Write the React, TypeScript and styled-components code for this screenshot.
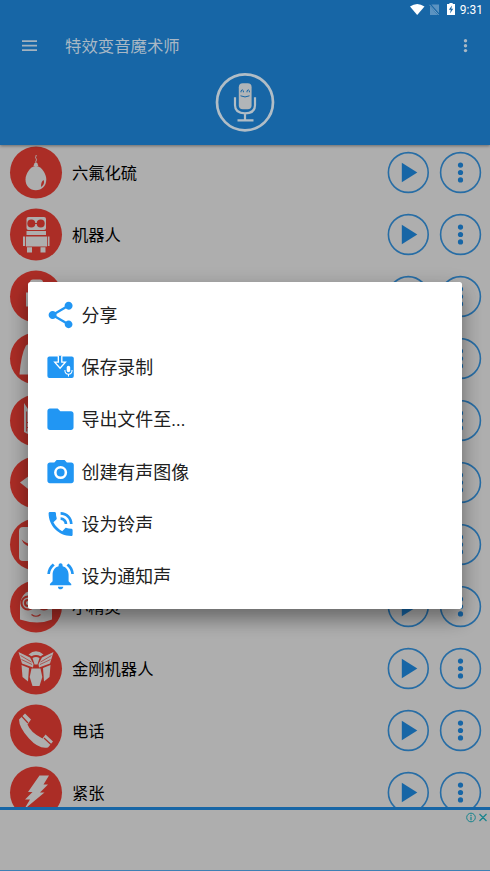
import React from "react";
import styled, { createGlobalStyle } from "styled-components";

const BLUE = "#1766a6";
const RED = "#ab2d26";
const GREY = "#aeaeae";
const ACCENT = "#2196f3";

const GlobalStyle = createGlobalStyle`
  * { box-sizing: border-box; }
  html, body { margin: 0; padding: 0; background: ${GREY}; }
  body { font-family: Roboto, "Noto Sans CJK SC", sans-serif; }
  svg { display: block; flex: none; overflow: visible; }
`;

const Screen = styled.div`
  position: relative;
  width: 490px;
  height: 871px;
  overflow: hidden;
  display: flex;
  flex-direction: column;
  background: ${GREY};
`;

const Header = styled.header`
  position: relative;
  z-index: 1;
  flex: none;
  height: 145px;
  background: ${BLUE};
  box-shadow: 0 1px 3px rgba(0, 0, 0, 0.4);
`;

const StatusBar = styled.div`
  height: 19px;
  display: flex;
  align-items: center;
  justify-content: flex-end;
  padding-right: 7px;
  color: #fff;
`;

const Clock = styled.span`
  font-size: 12px;
  line-height: 19px;
  padding-top: 1px;
  margin-left: 2px;
`;

const Toolbar = styled.div`
  height: 54px;
  display: flex;
  align-items: center;
  padding: 0 17px 0 22px;
`;

const Title = styled.h1`
  flex: 1;
  margin: 1px 0 0 28px;
  font-size: 16.4px;
  line-height: 24px;
  font-weight: 400;
  color: #a9b8c5;
`;

const MicHolder = styled.div`
  display: flex;
  justify-content: center;
  margin-top: -1px;
`;

const List = styled.main`
  flex: none;
  height: 662px;
  overflow: hidden;
`;

const Rows = styled.div`
  margin-top: -3.4px;
`;

const Row = styled.div`
  height: 62.05px;
  display: flex;
  align-items: center;
  padding: 0 8.5px 0 10px;
`;

const Label = styled.span`
  flex: 1;
  margin-left: 10px;
  padding-top: 2px;
  font-size: 16.3px;
  line-height: 24px;
  color: #000;
`;

const RoundButton = styled.button`
  width: 42px;
  height: 42px;
  margin-left: 10.2px;
  padding: 0;
  border: 0;
  background: none;
  &:first-of-type { margin-left: 0; }
`;

const AdBar = styled.footer`
  flex: 1;
  border-top: 3px solid ${BLUE};
  border-bottom: 1px solid #3f80b4;
  display: flex;
  justify-content: flex-end;
  padding: 1.5px 2px 0 0;
`;

const Dialog = styled.div`
  position: absolute;
  z-index: 2;
  left: 28px;
  top: 282px;
  width: 434px;
  height: 326.5px;
  padding-top: 7px;
  border-radius: 2.5px;
  background: #fff;
  box-shadow: 0 11px 18px rgba(0, 0, 0, 0.3), 0 5px 22px rgba(0, 0, 0, 0.14);
`;

const MenuItem = styled.div`
  height: 52.2px;
  display: flex;
  align-items: center;
  padding-left: 16.5px;
  gap: 5px;
`;

const MenuText = styled.span`
  padding-top: 2px;
  font-size: 17.95px;
  line-height: 26px;
  color: #212121;
`;

const Mic = () => (
  <svg width="60" height="60" viewBox="0 -0.3 60 60" fill="none" stroke="#b1bdc6">
    <circle cx="30" cy="30" r="28" strokeWidth="2.7" />
    <rect x="23.8" y="11" width="12.8" height="26" rx="4" fill="#b1b5b8" stroke="none" />
    <path d="M20 25v8q0 8 10 8t10-8v-8M30 41v6M22.500 48h16" strokeWidth="2.2" />
    <path d="M26 20v-1.500q1.300-2 2.400 0V20M32 20v-1.500q1.300-2 2.400 0V20M25.500 23.500q4.500 2.300 9 0" stroke={BLUE} strokeWidth="1" />
  </svg>
);

const StatusIcons = () => (
  <svg width="48" height="19" viewBox="0 0 48 19">
    <path d="M0 6.500Q7.200 1.400 14.500 6.500L7.200 15z" fill="#fff" />
    <path d="M21.500 4.500H29V15H20V7z" fill="#5c93c1" />
    <path d="M19.500 4l9.700 11" stroke={BLUE} strokeWidth="2" />
    <path d="M19.500 4.800l9.200 10.200" stroke="#72a1c8" strokeWidth="1" />
    <path d="M37 4h2.400V3h3.300v1H45v11h-8z" fill="#fff" />
    <path d="M42 5.500l-3.200 4.300h2L40 13.500l3.300-4.700h-2z" fill={BLUE} />
  </svg>
);

const figures: Record<string, React.ReactNode> = {
  balloon: (
    <>
      <path d="M25.500 19.500c-5.500.5-10 8-10 13.500 0 6.500 4.300 10.700 10.300 10.700S36.300 39.500 36.300 33c0-5.500-4.500-13-10-13.500z" />
      <path d="M23.500 19.500l1-3h2.800l1 3z" />
      <path d="M26 16.500c-1-2 1.500-2.500 0-4.500s1-2 0-3.500" fill="none" stroke={GREY} strokeWidth="1" />
      <path d="M33.500 33.500c1.500 3-.5 6-2.500 6.800 0-3 .5-5.500 2.500-6.800z" fill={RED} />
    </>
  ),
  robot: (
    <>
      <rect x="16.500" y="8.500" width="19.500" height="13" rx="2" />
      <path d="M16.500 22.500H36V26.500H16.500zM16 28h21v10H16zM13 28h2.200v9.500H13zM37.800 28H39.500v9.500h-1.700zM17 38.800h5V44h-5zM30.500 38.800h5V44h-5z" />
      <circle cx="21.300" cy="15" r="4" fill={RED} />
      <circle cx="30.700" cy="15" r="4" fill={RED} />
      <path d="M25 15h2" stroke={RED} />
    </>
  ),
  astronaut: (
    <path d="M20 12q0-3 3-3h7q3 0 3 3v2h4v22H16V22h2v-8h2z" />
  ),
  ghost: <path d="M9.500 42Q11 22 16 13l5-3h20v32z" />,
  cat: (
    <>
      <path d="M14 8.500l6 9h14l5-9v29q-11 8-25 0z" />
      <path d="M16.700 17v20M17 28h7M17 33h7" stroke={RED} strokeWidth="1" />
    </>
  ),
  fish: <path d="M10 26l15-11h16v23H25z" />,
  mask: (
    <>
      <path d="M13 8.500h25v34H13q-4 0-4-4v-26q0-4 4-4z" />
      <path d="M11.500 21q3 7 12 8v-3q-6 0-12-5z" fill={RED} />
    </>
  ),
  minion: (
    <>
      <path d="M10 25q1-15 16-16t16 16v14q-14 6-32 0z" />
      <g fill={GREY} stroke={RED} strokeWidth="2">
        <circle cx="18" cy="22.500" r="6.500" />
        <circle cx="34" cy="22.500" r="6.500" />
        <circle cx="18" cy="22.500" r="3" />
        <circle cx="34" cy="22.500" r="3" />
        <path d="M21.500 34q4.500 3.500 9 0" fill="none" strokeWidth="1.200" />
      </g>
    </>
  ),
  transformer: (
    <>
      <path d="M8.500 9.500L20 15l3.500 6.500L23 25 12 21zM43.500 9.500L32 15l-3.500 6.500L29 25l11-4z" />
      <path d="M18.500 12q7.500-6.500 15 0l-3 1.800q-4.500-2.800-9 0z" />
      <path d="M22.500 15.500q3.500-2 7 0L27.500 22h-3z" />
      <path d="M11.500 22.500l7.500 3-1 13.500-5.500-4.500zM40.500 22.500l-7.500 3 1 13.500 5.500-4.500z" />
      <path d="M21.500 26h9l1.800 8.500-2.800 9h-7l-2.800-9z" />
      <path d="M10.500 13l11 6.500M11.500 17l10.500 5M41.500 13l-11 6.500M40.500 17L30 22" stroke={RED} strokeWidth=".7" fill="none" />
    </>
  ),
  phone: (
    <>
      <path d="M9 15l6-6 6 6-3.500 5q3 8 15 14l3-4L43 37l-5 6Q29 45 19 34T9 15z" />
      <path d="M11.500 11.500l6.500 7M34 33.500l7 6.500" stroke={RED} strokeWidth="1.200" />
    </>
  ),
  lightning: <path d="M29.500 9H39l-5.500 9H38l-8 8h4.500L14 43l6-10h-5l7.500-7.500H18z" />,
};

const Avatar = ({ kind }: { kind: string }) => (
  <svg width="52" height="52" viewBox="0 0.5 52 52">
    <circle cx="26" cy="26" r="26" fill={RED} />
    <g fill={GREY}>{figures[kind]}</g>
  </svg>
);

const CircleIcon = ({ kind }: { kind: "play" | "more" }) => (
  <svg
    width="42"
    height="42"
    viewBox={kind === "play" ? "-0.3 0.5 42 42" : "0.5 0.5 42 42"}
    fill={BLUE}
  >
    <circle cx="21" cy="21" r="19.900" fill="none" stroke="#276da5" strokeWidth="1.600" />
    {kind === "play" ? (
      <path d="M14.500 11.300L30 21 14.500 30.700z" />
    ) : (
      [13.600, 21, 28.400].map((y) => <circle key={y} cx="21" cy={y} r="2.600" />)
    )}
  </svg>
);

const rows = [
  ["balloon", "六氟化硫"],
  ["robot", "机器人"],
  ["astronaut", ""],
  ["ghost", ""],
  ["cat", ""],
  ["fish", ""],
  ["mask", ""],
  ["minion", "小精灵"],
  ["transformer", "金刚机器人"],
  ["phone", "电话"],
  ["lightning", "紧张"],
];

const menu: [string, React.ReactNode][] = [
  ["分享", (
    <path key="s" d="M18 16.080c-.76 0-1.440.3-1.960.770L8.910 12.700c.05-.23.09-.46.09-.7s-.04-.47-.09-.7l7.050-4.110c.54.5 1.250.810 2.040.810 1.660 0 3-1.340 3-3s-1.340-3-3-3-3 1.340-3 3c0 .24.04.47.09.7L8.040 9.810C7.500 9.310 6.790 9 6 9c-1.660 0-3 1.340-3 3s1.340 3 3 3c.79 0 1.500-.31 2.040-.81l7.120 4.160c-.05.210-.08.430-.08.650 0 1.610 1.310 2.920 2.920 2.920s2.920-1.310 2.920-2.920-1.310-2.920-2.920-2.920z" />
  )],
  ["保存录制", (
    <g key="r">
      <rect x="2.100" y="4.200" width="19.800" height="16" rx="1.500" />
      <path d="M10.300 3.600v4.700H7.600l4 4.600 4-4.600h-2.700V3.600" fill={ACCENT} stroke="#fff" strokeWidth="1" />
      <rect x="16.600" y="11" width="2.600" height="5" rx="1.300" fill="#fff" />
      <path d="M15.200 14.200q0 3.200 2.700 3.200t2.700-3.200M17.900 17.400v1.800" fill="none" stroke="#fff" strokeWidth=".8" />
    </g>
  )],
  ["导出文件至...", (
    <path key="f" d="M9.800 4.200H4c-1.100 0-1.900.8-1.900 1.900v12.200c0 1.100.8 1.900 1.900 1.900h15.800c1.100 0 1.900-.8 1.900-1.900V8.100c0-1.100-.8-1.900-1.900-1.900h-8z" />
  )],
  ["创建有声图像", (
    <path key="c" fillRule="evenodd" d="M9 3L7.300 4.800H4C2.900 4.800 2.100 5.600 2.100 6.700v11.800c0 1.100.8 1.900 1.900 1.900h16c1.100 0 1.900-.8 1.900-1.900V6.700c0-1.100-.8-1.900-1.900-1.900h-3.300L15 3zm3 4.500a4.900 4.900 0 110 9.800 4.900 4.900 0 010-9.800zm0 1.900a3 3 0 100 6 3 3 0 000-6z" />
  )],
  ["设为铃声", (
    <path key="p" d="M20 15.500c-1.250 0-2.450-.2-3.570-.57-.1-.03-.21-.05-.31-.05-.26 0-.51.1-.71.290l-2.200 2.200c-2.830-1.440-5.150-3.750-6.590-6.590l2.200-2.200c.28-.28.360-.67.250-1.020C8.700 6.450 8.500 5.250 8.500 4c0-.55-.45-1-1-1H4c-.55 0-1 .45-1 1 0 9.390 7.610 17 17 17 .55 0 1-.45 1-1v-3.500c0-.55-.45-1-1-1zM19 12h2c0-4.970-4.030-9-9-9v2c3.870 0 7 3.130 7 7zm-4 0h2c0-2.760-2.240-5-5-5v2c1.660 0 3 1.340 3 3z" />
  )],
  ["设为通知声", (
    <path key="b" d="M7.580 4.080L6.150 2.650C3.750 4.480 2.170 7.300 2.030 10.500h2c.15-2.650 1.510-4.970 3.550-6.420zM19.970 10.500h2c-.15-3.200-1.730-6.020-4.120-7.850l-1.420 1.430c2.020 1.450 3.390 3.770 3.540 6.420zM18 11c0-3.070-1.640-5.640-4.500-6.320V4c0-.83-.67-1.500-1.500-1.500s-1.500.67-1.500 1.500v.68C7.630 5.360 6 7.920 6 11v5l-2 2v1h16v-1l-2-2v-5zm-6 11c.14 0 .27-.01.4-.04.65-.14 1.180-.58 1.440-1.180.1-.24.150-.5.150-.78h-4c.01 1.100.9 2 2.010 2z" />
  )],
];

export default function App() {
  return (
    <Screen>
      <GlobalStyle />
      <Header>
        <StatusBar>
          <StatusIcons />
          <Clock>9:31</Clock>
        </StatusBar>
        <Toolbar>
          <svg width="15" height="12" viewBox="0 0 15 12" fill="#a4b2be">
            <path d="M0 .2h15V2H0zM0 4.700h15v1.800H0zM0 9.200h15V11H0z" />
          </svg>
          <Title>特效变音魔术师</Title>
          <svg width="15" height="16" viewBox="0 0 15 16" fill="#a9b8c5">
            {[2.800, 7.700, 12.600].map((y) => <circle key={y} cx="7.500" cy={y} r="1.700" />)}
          </svg>
        </Toolbar>
        <MicHolder><Mic /></MicHolder>
      </Header>
      <List>
        <Rows>
          {rows.map(([kind, label]) => (
            <Row key={kind}>
              <Avatar kind={kind} />
              <Label>{label}</Label>
              <RoundButton><CircleIcon kind="play" /></RoundButton>
              <RoundButton><CircleIcon kind="more" /></RoundButton>
            </Row>
          ))}
        </Rows>
      </List>
      <AdBar>
        <svg width="23" height="12" viewBox="0 0 23 12" fill="none" stroke="#16848d">
          <circle cx="6" cy="5.500" r="4.300" strokeWidth="1" />
          <path d="M6 4.800v3.500M6 2.700v1.200M14.500 2l7 7M21.500 2l-7 7" strokeWidth="1.200" />
        </svg>
      </AdBar>
      <Dialog>
        {menu.map(([label, icon]) => (
          <MenuItem key={label}>
            <svg width="32" height="32" viewBox="0.3 0 24 24" fill={ACCENT}>{icon}</svg>
            <MenuText>{label}</MenuText>
          </MenuItem>
        ))}
      </Dialog>
    </Screen>
  );
}
